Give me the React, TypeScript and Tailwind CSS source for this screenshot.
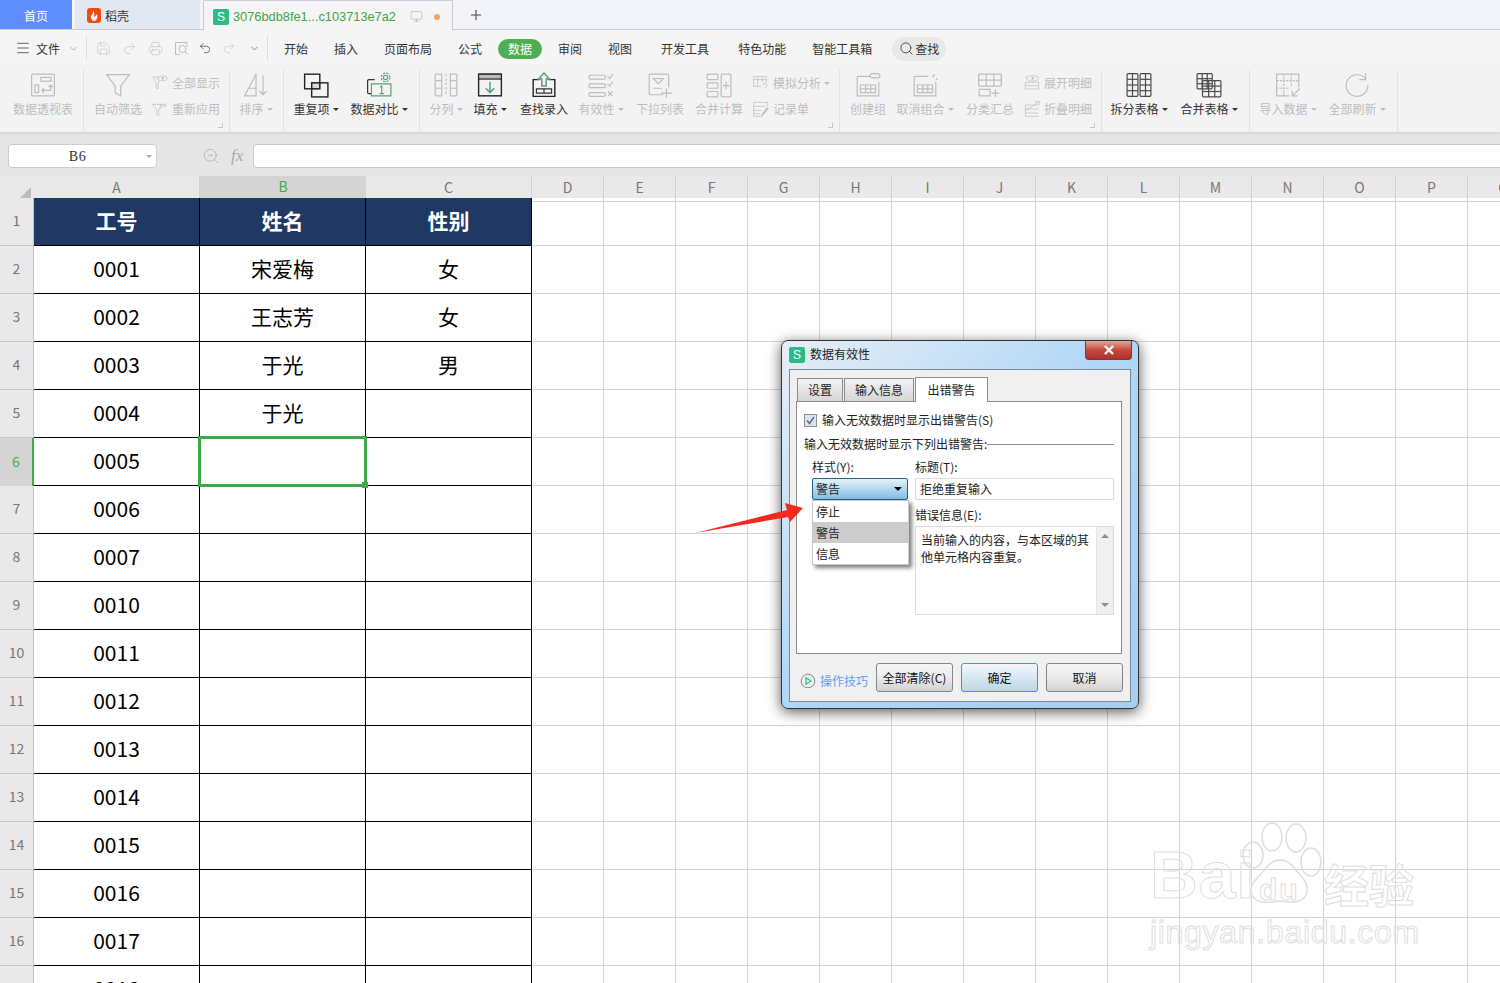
import React from "react";
import { ChevronDown, Menu, Monitor, Plus, Printer, Redo2, Save, Search, Undo2, ZoomOut } from "lucide-react";

const GREEN = "#5f9f78";

// Base for ribbon icons: everything is drawn on a 24 grid
const Ic = ({ s = 26, children }: { s?: number; children: React.ReactNode }) => (
  <svg width={s} height={s} viewBox="0 0 24 24" fill="none" stroke="currentColor" strokeWidth={1.1}>
    {children}
  </svg>
);

const Grid = ({ x, y, w, h, cols, rows }: { x: number; y: number; w: number; h: number; cols: number; rows: number }) => (
  <g>
    <rect x={x} y={y} width={w} height={h} rx={1} />
    {Array.from({ length: cols - 1 }).map((_, i) => (
      <path key={i} d={`M${x + ((i + 1) * w) / cols} ${y}v${h}`} />
    ))}
    {Array.from({ length: rows - 1 }).map((_, i) => (
      <path key={i} d={`M${x} ${y + ((i + 1) * h) / rows}h${w}`} />
    ))}
  </g>
);

const icons = {
  pivot: (
    <Ic>
      <rect x="1.5" y="2" width="21" height="20" rx="1" />
      <rect x="10" y="5" width="9.5" height="3.5" />
      <rect x="4.5" y="12" width="3.5" height="7" />
      <path d="M11 17h8v-5M17 14l2-2 2 2M13 15l-2 2 2 2" />
    </Ic>
  ),
  funnel: (
    <Ic>
      <path d="M1.5 2.5h21L14.5 13v9l-5-2.5V13z" />
    </Ic>
  ),
  filterEye: (
    <Ic s={16}>
      <path d="M1 3h9l-2 3 3 5v0l-2 1v9l-3-2v-8z" />
      <ellipse cx="16" cy="5" rx="6.5" ry="3.5" />
      <circle cx="16" cy="5" r="1.4" fill="currentColor" />
    </Ic>
  ),
  filterRedo: (
    <Ic s={16}>
      <path d="M1 5h15l-6 8v9l-3-2v-7z" />
      <path d="M14 12a4 4 0 1 1 6-4M20 4v4h-4" />
    </Ic>
  ),
  sort: (
    <Ic>
      <path d="M1.5 22L12 2v20zM5 15h7" />
      <path d="M18.5 3v18M15 17.5l3.5 3.5 3.5-3.5" />
    </Ic>
  ),
  dup: (
    <Ic>
      <rect x="8" y="10" width="7.5" height="5.5" fill="#cfe2d6" stroke={GREEN} />
      <rect x="1.5" y="2" width="14" height="13.5" stroke="#222" strokeWidth="1.3" />
      <rect x="8" y="10" width="15" height="13" stroke="#222" strokeWidth="1.3" />
    </Ic>
  ),
  compare: (
    <Ic>
      <path d="M5 20H2.5a1 1 0 0 1-1-1V8a1 1 0 0 1 1-1H8" stroke="#333" />
      <path d="M5 11h18v11H5z" stroke={GREEN} />
      <path d="M13 14l1.5-1v7M12.5 20h4" stroke={GREEN} />
      <circle cx="18" cy="5" r="2" stroke={GREEN} />
      <circle cx="18" cy="5" r="4" stroke={GREEN} strokeDasharray="2 1.2" />
    </Ic>
  ),
  split: (
    <Ic>
      <path d="M8 2H3a1 1 0 0 0-1 1v18a1 1 0 0 0 1 1h5zM2 8h6M2 15h6" />
      <path d="M16 2h5a1 1 0 0 1 1 1v18a1 1 0 0 1-1 1h-5zM16 8h6M16 15h6" />
      <path d="M12 2v20" strokeDasharray="2 2" />
    </Ic>
  ),
  fill: (
    <Ic>
      <rect x="1.5" y="2" width="21" height="20" stroke="#222" strokeWidth="1.3" />
      <rect x="1.5" y="2" width="21" height="4.5" fill="#bbb" stroke="#222" />
      <path d="M12 9v10M8 15l4 4 4-4" stroke={GREEN} strokeWidth="1.4" />
    </Ic>
  ),
  lookup: (
    <Ic>
      <path d="M8 7H2v15.5h20V7h-6" stroke="#222" strokeWidth="1.3" />
      <path d="M5 15.5h14v4H5zM12 15.5v4" stroke="#333" />
      <path d="M12 1L7 6.5h3V13h4V6.5h3z" stroke={GREEN} strokeWidth="1.4" />
    </Ic>
  ),
  valid: (
    <Ic>
      <rect x="1" y="3" width="15" height="3.5" rx="1" />
      <rect x="1" y="11" width="15" height="3.5" rx="1" />
      <rect x="1" y="19" width="15" height="3.5" rx="1" />
      <path d="M18 4l2 2 3-4M18 11l2 2 3-4M18.5 18l4 4M22.5 18l-4 4" />
    </Ic>
  ),
  dropdown: (
    <Ic>
      <path d="M20 14V3a1 1 0 0 0-1-1H3a1 1 0 0 0-1 1v17a1 1 0 0 0 1 1h12" />
      <path d="M6 6h9l-4.5 5zM6 15h8M18 15v9M13 19.5h10" />
    </Ic>
  ),
  merge: (
    <Ic>
      <rect x="1" y="2" width="10" height="5" rx="1" />
      <rect x="1" y="10" width="10" height="5" rx="1" />
      <rect x="1" y="18" width="10" height="5" rx="1" />
      <rect x="14" y="2" width="9" height="21" rx="1" />
      <path d="M18.500 9v7M15.500 12.500h6" />
    </Ic>
  ),
  whatIf: (
    <Ic s={16}>
      <path d="M20 11V2H1v15h11M1 7h19M7 2v15M14 2v9" />
      <path d="M15 15a3 3 0 1 1 4 3l-1 2M18 22v1" />
    </Ic>
  ),
  record: (
    <Ic s={16}>
      <path d="M22 8V2H1v21h13M1 8h17M1 14h12M1 19h9" />
      <path d="M23 11l-7 9-3 2 1-3 7-9z" fill="currentColor" />
    </Ic>
  ),
  group: (
    <Ic>
      <path d="M14 4H3a1 1 0 0 0-1 1v17h20V9" />
      <path d="M5 12h14v7H5zM5 15.5h14M10 12v7M14.500 12v7" />
      <rect x="14" y="1.500" width="9" height="4" rx="2" />
    </Ic>
  ),
  ungroup: (
    <Ic>
      <path d="M15 4H3a1 1 0 0 0-1 1v17h20V9" />
      <path d="M5 12h14v7H5zM5 15.500h14M10 12v7M14.500 12v7" />
      <path d="M19 5l2-3M22 7l2-1" />
    </Ic>
  ),
  subtotal: (
    <Ic>
      <Grid x={1.5} y={2} w={21} h={11} cols={3} rows={2} />
      <path d="M2 16h10v6H2zM17 16v7M13.500 19.500h7" />
    </Ic>
  ),
  expand: (
    <Ic s={16}>
      <ellipse cx="13" cy="5" rx="9" ry="4" />
      <circle cx="13" cy="5" r="1.600" fill="currentColor" />
      <path d="M2 3h3M2 11h20M2 16h20M2 21h20M2 11v10M22 11v10" />
    </Ic>
  ),
  fold: (
    <Ic s={16}>
      <path d="M2 6h20M2 12h20M2 18h20M2 23h20M2 6v17M22 1L2 15" />
      <path d="M16 1h7v5" />
    </Ic>
  ),
  splitTable: (
    <Ic>
      <Grid x={1} y={1.5} w={10} h={21} cols={2} rows={4} />
      <Grid x={13} y={1.5} w={10} h={21} cols={2} rows={4} />
    </Ic>
  ),
  mergeTable: (
    <Ic>
      <Grid x={1} y={1.5} w={14} h={14} cols={3} rows={3} />
      <Grid x={6} y={8} w={17} h={15} cols={3} rows={3} />
    </Ic>
  ),
  importData: (
    <Ic>
      <path d="M22 14V2H1.500v20H13" />
      <path d="M1.500 8h20.500M1.500 15h12M8 2v20M15 2v12" strokeDasharray="2 1" />
      <path d="M23 15l-7 7M16 17v5h5" />
    </Ic>
  ),
  refresh: (
    <Ic>
      <path d="M20 6.500A10 10 0 1 0 22 12" />
      <path d="M20 1v6h-6" />
    </Ic>
  ),
};

const Caret = () => (
  <span className="ml-[3px] inline-block h-0 w-0 border-x-[3px] border-t-[3px] border-x-transparent border-t-current" />
);

const Big = ({
  w,
  label,
  caret,
  on,
  icon,
}: {
  w: string;
  label: string;
  caret?: boolean;
  on?: boolean;
  icon: React.ReactNode;
}) => (
  <div className={`flex shrink-0 flex-col items-center ${w} ${on ? "text-[#333333]" : "text-[#bdbdbd]"}`}>
    <div className={`flex h-[30px] items-center ${on ? "text-[#4a4a4a]" : ""}`}>{icon}</div>
    <div className="flex h-[18px] items-center whitespace-nowrap text-xs">
      {label}
      {caret && <Caret />}
    </div>
  </div>
);

const Small = ({ label, caret, icon }: { label: string; caret?: boolean; icon: React.ReactNode }) => (
  <div className="flex h-[26px] items-center gap-[4px] whitespace-nowrap text-xs text-[#bdbdbd]">
    {icon}
    <span className="flex items-center">
      {label}
      {caret && <Caret />}
    </span>
  </div>
);

const Group = ({ w, children, corner }: { w: string; children: React.ReactNode; corner?: boolean }) => (
  <div className={`relative flex h-[62px] shrink-0 border-r border-[#e2e2e2] ${w}`}>
    {children}
    {corner && <span className="absolute bottom-[4px] right-[6px] h-[5px] w-[5px] border-b border-r border-[#c4c4c4]" />}
  </div>
);

const rows = [
  ["0001", "宋爱梅", "女"],
  ["0002", "王志芳", "女"],
  ["0003", "于光", "男"],
  ["0004", "于光", ""],
  ["0005", "", ""],
  ["0006", "", ""],
  ["0007", "", ""],
  ["0010", "", ""],
  ["0011", "", ""],
  ["0012", "", ""],
  ["0013", "", ""],
  ["0014", "", ""],
  ["0015", "", ""],
  ["0016", "", ""],
  ["0017", "", ""],
  ["0018", "", ""],
];

const letters = ["A", "B", "C", "D", "E", "F", "G", "H", "I", "J", "K", "L", "M", "N", "O", "P", "Q"];
const emptyCols = letters.slice(3);

const GRID = "grid grid-cols-[34px_166px_166px_166px_repeat(14,72px)]";

const Logo = () => (
  <span className="flex h-[16px] w-[16px] items-center justify-center rounded-[2px] bg-[#2dbb85] font-['Liberation_Sans',sans-serif] text-[12px] leading-none text-white">
    S
  </span>
);

const DlgButton = ({ label, primary }: { label: string; primary?: boolean }) => (
  <div
    className={`flex h-[29px] w-[77px] items-center justify-center rounded-[3px] border text-xs text-[#111111] ${
      primary
        ? "border-[#2f9fd8] bg-gradient-to-b from-[#f3f8fc] to-[#bcd7e6]"
        : "border-[#858585] bg-gradient-to-b from-[#f6f6f6] via-[#ebebeb] to-[#d2d2d2]"
    }`}
  >
    {label}
  </div>
);

const Dialog = () => (
  <div className="absolute left-[781px] top-[340px] flex h-[369px] w-[358px] flex-col rounded-[7px] border border-[#2e3338] bg-gradient-to-br from-[#e6eef5] via-[#aed6f7] to-[#a4cff2] px-[7px] pb-[6px] text-[#222222] shadow-[0_3px_14px_rgba(0,0,0,0.65)]">
    <div className="relative flex h-[28px] shrink-0 items-center gap-[5px] pb-[1px] text-xs">
      <Logo />
      <span className="-mt-[1px]">数据有效性</span>
      <div className="absolute -right-px top-0 flex h-[19px] w-[47px] items-center justify-center rounded-b-[4px] border border-t-0 border-[#7d3a35] bg-gradient-to-b from-[#e0a79e] via-[#c4483c] to-[#b3302a]">
        <svg width="12" height="10" viewBox="0 0 12 10" fill="none" stroke="#fff" strokeWidth="2.400">
          <path d="M2 1l8 8M10 1L2 9" />
        </svg>
      </div>
    </div>
    <div className="flex flex-1 flex-col border border-[#7d8894] bg-[#f0f0f0] px-[6px] pt-[7px]">
      {/* tabs */}
      <div className="relative z-10 -mb-px flex h-[25px] items-end gap-[1px] pl-[1px] text-xs">
        <div className="flex h-[24px] w-[46px] items-center justify-center border border-[#8c8c8c] bg-gradient-to-b from-[#f2f2f2] to-[#d6d6d6]">
          设置
        </div>
        <div className="flex h-[24px] w-[70px] items-center justify-center border border-[#8c8c8c] bg-gradient-to-b from-[#f2f2f2] to-[#d6d6d6]">
          输入信息
        </div>
        <div className="flex h-[25px] w-[73px] items-center justify-center border border-b-0 border-[#8c8c8c] bg-white">
          出错警告
        </div>
      </div>
      <div className="flex h-[253px] w-[326px] flex-col border border-[#8c8c8c] bg-white pl-[7px] pr-[7px] text-xs">
        <div className="mt-[11px] flex h-[14px] items-center gap-[5px]">
          <span className="flex h-[13px] w-[13px] items-center justify-center border border-[#8e8f8f] bg-[#dbe3ee]">
            <svg width="9" height="9" viewBox="0 0 9 9" fill="none" stroke="#5a6f90" strokeWidth="1.600">
              <path d="M1 4.500l2.500 3L8 1" />
            </svg>
          </span>
          <span>输入无效数据时显示出错警告(S)</span>
        </div>
        <div className="mt-[10px] flex h-[14px] items-center">
          <span className="whitespace-nowrap">输入无效数据时显示下列出错警告:</span>
          <span className="h-px flex-1 bg-[#8f8f8f]" />
        </div>
        <div className="ml-[8px] mt-[9px] flex">
          <div className="relative w-[103px] shrink-0">
            <div className="flex h-[14px] items-center">样式(Y):</div>
            <div className="mt-[4px] flex h-[22px] w-[96px] items-center justify-between rounded-[2px] border border-[#2c628b] bg-gradient-to-b from-[#e4f3fb] to-[#7fbde4] pl-[3px] pr-[5px]">
              <span>警告</span>
              <span className="h-0 w-0 border-x-[4px] border-t-[4px] border-x-transparent border-t-black" />
            </div>
            <div className="absolute left-0 top-[40px] z-10 flex w-[97px] flex-col border border-[#c9c9c9] bg-white shadow-[3px_3px_4px_rgba(0,0,0,0.5)]">
              <div className="flex h-[21px] items-center pl-[3px]">停止</div>
              <div className="flex h-[21px] items-center bg-[#cccccc] pl-[3px]">警告</div>
              <div className="flex h-[21px] items-center pl-[3px]">信息</div>
            </div>
          </div>
          <div className="flex-1">
            <div className="flex h-[14px] items-center">标题(T):</div>
            <div className="mt-[4px] flex h-[22px] items-center border border-[#dcdcdc] pl-[4px]">拒绝重复输入</div>
            <div className="mt-[8px] flex h-[14px] items-center">错误信息(E):</div>
            <div className="mt-[4px] flex h-[89px] border border-[#dcdcdc]">
              <div className="flex-1 pl-[5px] pt-[4px] leading-[17px]">当前输入的内容，与本区域的其他单元格内容重复。</div>
              <div className="flex w-[17px] shrink-0 flex-col items-center justify-between border-l border-[#e4e4e4] bg-[#f0f0f0] py-[7px]">
                <span className="h-0 w-0 border-x-[4px] border-b-[4px] border-x-transparent border-b-[#8f8f8f]" />
                <span className="h-0 w-0 border-x-[4px] border-t-[4px] border-x-transparent border-t-[#8f8f8f]" />
              </div>
            </div>
          </div>
        </div>
      </div>
      <div className="mt-[9px] flex text-xs">
        <div className="flex w-[80px] items-center gap-[4px] pl-[4px] pt-[7px] text-[#639df0]">
          <svg width="16" height="16" viewBox="0 0 16 16" fill="none">
            <circle cx="8" cy="8" r="6.800" stroke="#8a8a8a" />
            <path d="M6 4.800v6.400L11 8z" stroke="#2fb88a" strokeWidth="1.200" />
          </svg>
          <span className="whitespace-nowrap">操作技巧</span>
        </div>
        <div className="flex gap-[8px]">
          <DlgButton label="全部清除(C)" />
          <DlgButton label="确定" primary />
          <DlgButton label="取消" />
        </div>
      </div>
    </div>
  </div>
);

const Watermark = () => (
  <div className="pointer-events-none absolute left-[1148px] top-[822px] h-[132px] w-[280px] text-transparent [-webkit-text-stroke:1px_#dedede]">
    <span className="absolute left-[2px] top-[15px] font-['Liberation_Sans',sans-serif] text-[66px] font-bold leading-[76px] tracking-[1px]">
      Bai
    </span>
    <svg className="absolute left-[80px] top-0" width="100" height="92" viewBox="0 0 100 92" fill="none" stroke="#dedede" strokeWidth="1.500">
      <ellipse cx="25" cy="33" rx="10" ry="13" />
      <ellipse cx="44" cy="15" rx="10" ry="14" />
      <ellipse cx="68" cy="16" rx="10" ry="14" />
      <ellipse cx="83" cy="40" rx="10" ry="14" />
      <path d="M52 38c10 0 14 8 20 15 7 7 9 13 6 20-4 8-14 8-26 6-12 2-24 3-28-6-3-8 2-14 8-20 6-6 10-15 20-15z" />
    </svg>
    <span className="absolute left-[111px] top-[50px] font-['Liberation_Sans',sans-serif] text-[30px] font-bold leading-[36px] tracking-[2px]">
      du
    </span>
    <span className="absolute left-[176px] top-[32px] font-['Noto_Sans_CJK_SC',sans-serif] text-[45px] font-bold leading-[60px]">
      经验
    </span>
    <span className="absolute left-[2px] top-[91px] font-['Liberation_Sans',sans-serif] text-[32px] leading-[38px] tracking-[0.7px]">
      jingyan.baidu.com
    </span>
  </div>
);

const RedArrow = () => (
  <svg className="absolute left-[690px] top-[498px]" width="120" height="40" viewBox="0 0 120 40">
    <path d="M5 35L97 12 95 5l18 5-13 14-2-5z" fill="#f5281e" />
  </svg>
);

export default function App() {
  return (
    <div className="relative h-[983px] w-[1500px] overflow-hidden bg-white font-['Noto_Sans_CJK_SC','Noto_Sans',sans-serif]">
      {/* window tabs */}
      <div className="flex h-[30px] border-b border-[#c9cbdb] bg-[#f3f4f9] text-xs">
        <div className="flex h-[29px] w-[72px] items-center justify-center bg-[#5f8ffe] pt-[2px] text-white">首页</div>
        <div className="ml-[3px] flex h-[29px] w-[125px] items-center gap-[4px] bg-[#e3e7f0] pl-[12px] pt-[2px] text-[#333333]">
          <svg width="14" height="15" viewBox="0 0 14 15">
            <rect width="14" height="15" rx="3" fill="#f04a12" />
            <path d="M6 2C7 6 3 7 4 10c.5 2 2 3 3.500 3C10 12 11 9 10 6 9 8 8 9 7 9c1-2 0-5-1-7z" fill="#fff" />
          </svg>
          稻壳
        </div>
        <div className="ml-[3px] flex h-[30px] w-[250px] items-center rounded-t-[2px] border border-b-0 border-[#c9cbdb] bg-[#f5f5f5] pl-[9px] pt-[2px]">
          <Logo />
          <span className="ml-[4px] font-['Liberation_Sans',sans-serif] text-[12.8px] text-[#3fa648]">3076bdb8fe1...c103713e7a2</span>
          <Monitor size={13} strokeWidth={1} className="ml-[14px] text-[#a0a0a0]" />
          <span className="ml-[11px] h-[6px] w-[6px] rounded-full bg-[#eda765]" />
        </div>
        <Plus size={16} strokeWidth={1.600} className="ml-[15px] self-center text-[#444444]" />
      </div>

      {/* menu bar */}
      <div className="flex h-[36px] items-center bg-[#f5f5f5] pl-[15px] text-xs text-[#333333]">
        <Menu size={16} strokeWidth={1.100} />
        <span className="ml-[5px] pt-[2px]">文件</span>
        <ChevronDown size={13} strokeWidth={1} className="ml-[7px] text-[#777777]" />
        <span className="ml-[6px] h-[24px] w-px bg-[#dcdcdc]" />
        <div className="ml-[9px] flex items-center gap-[11px] text-[#bdbdbd]">
          <Save size={15} strokeWidth={1} />
          <Redo2 size={15} strokeWidth={1} />
          <Printer size={15} strokeWidth={1} />
          {/* print preview: page with a magnifier */}
          <svg width="15" height="15" viewBox="0 0 15 15" fill="none" stroke="currentColor">
            <path d="M13 6V1.500H1.500v12H6" />
            <circle cx="8.500" cy="8" r="3.500" />
            <path d="M11 10.500l3 3" />
          </svg>
        </div>
        <Undo2 size={14} strokeWidth={1.200} className="ml-[9px] text-[#444444]" />
        <Redo2 size={14} strokeWidth={1} className="ml-[10px] text-[#bdbdbd]" />
        <ChevronDown size={11} strokeWidth={1.400} className="ml-[13px] text-[#444444]" />
        <span className="ml-[7px] h-[24px] w-px bg-[#dcdcdc]" />
        <span className="ml-[16px] pt-[2px]">开始</span>
        <span className="ml-[26px] pt-[2px]">插入</span>
        <span className="ml-[26px] pt-[2px]">页面布局</span>
        <span className="ml-[26px] pt-[2px]">公式</span>
        <span className="ml-[16px] mt-[2px] flex h-[20px] w-[44px] items-center justify-center rounded-full bg-[#4fae52] text-white">数据</span>
        <span className="ml-[16px] pt-[2px]">审阅</span>
        <span className="ml-[26px] pt-[2px]">视图</span>
        <span className="ml-[29px] pt-[2px]">开发工具</span>
        <span className="ml-[29px] pt-[2px]">特色功能</span>
        <span className="ml-[26px] pt-[2px]">智能工具箱</span>
        <span className="ml-[20px] mt-[1px] flex h-[24px] w-[54px] items-center justify-center gap-[1px] rounded-full bg-[#e8e8e8]">
          <Search size={15} strokeWidth={1.300} />
          查找
        </span>
      </div>

      {/* ribbon */}
      <div className="relative z-10 flex h-[66px] bg-[#f3f3f3] pt-[4px] shadow-[0_1px_3px_rgba(0,0,0,0.12)]">
        <Group w="w-[84px]">
          <Big w="w-[83px] pl-[3px]" label="数据透视表" icon={icons.pivot} />
        </Group>
        <Group w="w-[146px]" corner>
          <Big w="w-[68px]" label="自动筛选" icon={icons.funnel} />
          <div className="flex flex-col">
            <Small label="全部显示" icon={icons.filterEye} />
            <Small label="重新应用" icon={icons.filterRedo} />
          </div>
        </Group>
        <Group w="w-[54px]">
          <Big w="w-[52px]" label="排序" caret icon={icons.sort} />
        </Group>
        <Group w="w-[136px]">
          <Big w="w-[64px]" label="重复项" caret on icon={icons.dup} />
          <Big w="w-[62px]" label="数据对比" caret on icon={icons.compare} />
        </Group>
        <Group w="w-[420px]" corner>
          <Big w="w-[52px]" label="分列" caret icon={icons.split} />
          <Big w="w-[36px]" label="填充" caret on icon={icons.fill} />
          <Big w="w-[72px]" label="查找录入" on icon={icons.lookup} />
          <Big w="w-[42px]" label="有效性" caret icon={icons.valid} />
          <Big w="w-[76px]" label="下拉列表" icon={icons.dropdown} />
          <Big w="w-[42px]" label="合并计算" icon={icons.merge} />
          <div className="ml-[13px] flex flex-col">
            <Small label="模拟分析" caret icon={icons.whatIf} />
            <Small label="记录单" icon={icons.record} />
          </div>
        </Group>
        <Group w="w-[262px]" corner>
          <Big w="w-[56px]" label="创建组" icon={icons.group} />
          <Big w="w-[58px]" label="取消组合" caret icon={icons.ungroup} />
          <Big w="ml-[4px] w-[64px]" label="分类汇总" icon={icons.subtotal} />
          <div className="ml-[2px] flex flex-col">
            <Small label="展开明细" icon={icons.expand} />
            <Small label="折叠明细" icon={icons.fold} />
          </div>
        </Group>
        <Group w="w-[148px]">
          <Big w="w-[74px]" label="拆分表格" caret on icon={icons.splitTable} />
          <Big w="w-[66px]" label="合并表格" caret on icon={icons.mergeTable} />
        </Group>
        <Group w="w-[148px]">
          <Big w="w-[76px]" label="导入数据" caret icon={icons.importData} />
          <Big w="w-[62px]" label="全部刷新" caret icon={icons.refresh} />
        </Group>
      </div>

      {/* formula bar */}
      <div className="flex h-[44px] items-center bg-[#e6e6e6] pl-[8px] pt-[4px]">
        <div className="flex h-[24px] w-[149px] items-center rounded-[4px] border border-[#cccccc] bg-white pr-[4px]">
          <span className="flex-1 text-center font-['Liberation_Serif',serif] text-[14px] tracking-[0.5px] text-[#333333]">B6</span>
          <span className="h-0 w-0 border-x-[3px] border-t-[3px] border-x-transparent border-t-[#aaaaaa]" />
        </div>
        <ZoomOut size={18} strokeWidth={1} className="ml-[45px] text-[#a8a8a8]" />
        <span className="ml-[11px] font-['Liberation_Serif',serif] text-[17px] italic text-[#a8a8a8]">fx</span>
        <div className="ml-[10px] h-[24px] flex-1 rounded-l-[4px] border border-r-0 border-[#c8c8c8] bg-white" />
      </div>

      {/* column headers */}
      <div className={`${GRID} h-[22px] bg-[#e9e9e9] text-[14px] text-[#777777]`}>
        <div className="flex items-end justify-end border-b border-[#c4c4c4] pb-[2px] pr-[3px]">
          <span className="h-0 w-0 border-b-[12px] border-l-[12px] border-b-[#bdbdbd] border-l-transparent" />
        </div>
        {letters.map((l) => (
          <div
            key={l}
            className={
              l === "B"
                ? "flex items-center justify-center border-b-2 border-[#3faa49] bg-[#d4d4d4] pb-[3px] text-[#3faa49]"
                : "flex items-center justify-center border-b border-r border-[#d0d0d0] pb-[3px]"
            }
          >
            {l}
          </div>
        ))}
      </div>

      {/* sheet */}
      <div className={`${GRID} auto-rows-[48px]`}>
        <div className="flex items-center justify-center border-b border-r border-[#c4c4c4] bg-[#e9e9e9] pb-[2px] text-[14px] text-[#777777]">1</div>
        {["工号", "姓名", "性别"].map((h) => (
          <div
            key={h}
            className="flex items-center justify-center border-b border-r border-black bg-[#1f3864] pb-[2px] text-[21px] font-bold text-white"
          >
            {h}
          </div>
        ))}
        {emptyCols.map((l) => (
          <div key={l} className="border-b border-r border-[#d4d4d4]" />
        ))}
        {rows.map((r, i) => (
          <React.Fragment key={r[0]}>
            <div
              className={
                i === 4
                  ? "flex items-center justify-center border-r-2 border-[#3faa49] bg-[#d4d4d4] pb-[2px] text-[14px] text-[#3faa49]"
                  : "flex items-center justify-center border-b border-r border-[#c4c4c4] bg-[#e9e9e9] pb-[2px] text-[14px] text-[#777777]"
              }
            >
              {i + 2}
            </div>
            {r.map((v, c) => (
              <div key={c} className="relative flex items-center justify-center border-b border-r border-black pb-[2px] text-[21px] text-black">
                {v}
                {i === 4 && c === 1 && (
                  <span className="absolute -inset-[2px] z-10 border-[3px] border-[#3faa49]">
                    <span className="absolute -bottom-[4px] -right-[4px] h-[6px] w-[6px] bg-[#3faa49]" />
                  </span>
                )}
              </div>
            ))}
            {emptyCols.map((l) => (
              <div key={l} className="border-b border-r border-[#d4d4d4]" />
            ))}
          </React.Fragment>
        ))}
      </div>

      <Watermark />
      <Dialog />
      <RedArrow />
    </div>
  );
}
